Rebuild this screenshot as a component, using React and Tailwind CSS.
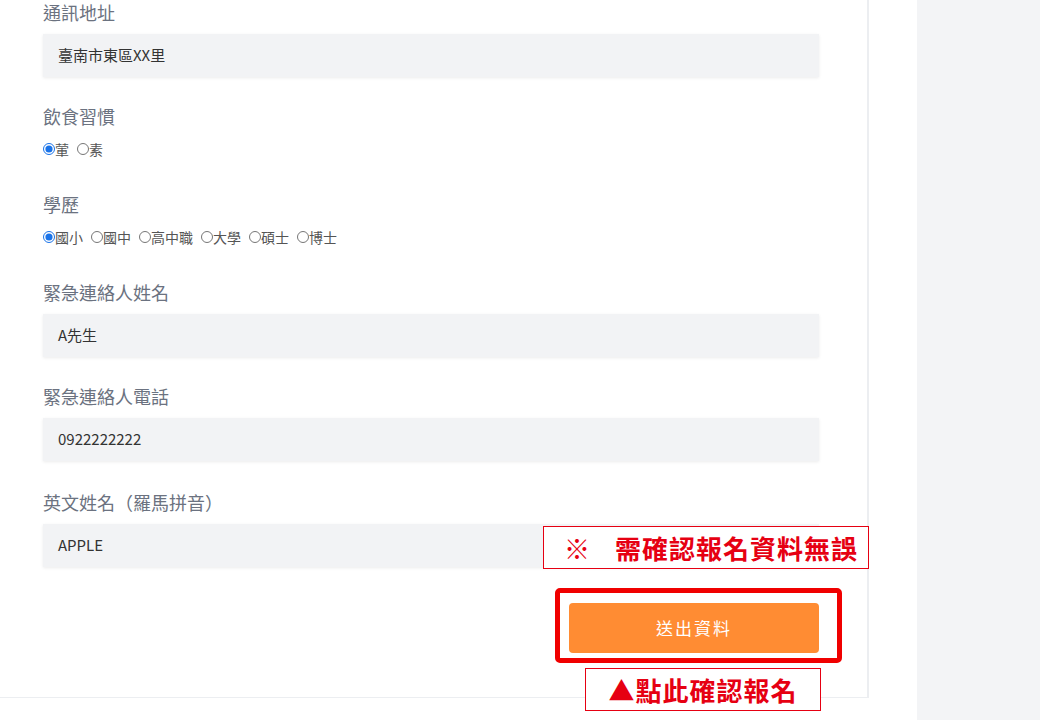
const font = { fontFamily: '"Noto Sans CJK TC", "Noto Sans", sans-serif' };

function Label({ children }) {
  return <div className="text-[18px] leading-6 text-[#6b7280]">{children}</div>;
}

function TextField({ label, value, gap = 'mb-[28px]' }) {
  return (
    <div className={gap}>
      <Label>{label}</Label>
      <div className="mt-[10px] h-[43px] bg-[#f2f3f5] shadow-[0_1px_3px_rgba(0,0,0,0.08)] flex items-center pl-[15px] text-[15px] text-[#333]">
        {value}
      </div>
    </div>
  );
}

function RadioGroup({ label, name, options }) {
  return (
    <div className="mb-[33px]">
      <Label>{label}</Label>
      <div className="mt-[11px] h-5 flex items-center text-[14px] text-[#555]">
        {options.map((o, i) => (
          <label key={o} className="flex items-center mr-[8px]">
            <input
              type="radio"
              name={name}
              defaultChecked={i === 0}
              className="m-0 w-3 h-3 accent-[#1a73e8]"
            />
            <span>{o}</span>
          </label>
        ))}
      </div>
    </div>
  );
}

export default function App() {
  return (
    <div className="flex min-h-[720px] bg-white" style={font}>
      <div className="w-[917px] shrink-0 bg-white">
        <div className="relative w-[869px] border-r-2 border-b border-[#eceef1] pl-[43px] pr-[48px] pb-[44px]">
          <TextField label="通訊地址" value="臺南市東區XX里" gap="mb-[27px]" />
          <RadioGroup label="飲食習慣" name="diet" options={['葷', '素']} />
          <RadioGroup
            label="學歷"
            name="edu"
            options={['國小', '國中', '高中職', '大學', '碩士', '博士']}
          />
          <TextField label="緊急連絡人姓名" value="A先生" gap="mb-[27px]" />
          <TextField label="緊急連絡人電話" value="0922222222" gap="mb-[29px]" />
          <TextField label="英文姓名（羅馬拼音）" value="APPLE" gap="" />

          <div className="flex justify-end mt-[36px]">
            <button className="w-[250px] h-[50px] rounded-sm bg-[#ff8c33] text-white text-[17px] tracking-[2px]">
              送出資料
            </button>
          </div>

          {/* 標註 */}
          <div className="absolute left-[543px] top-[526px] w-[326px] h-[43px] border border-[#e60012] bg-white flex items-center pl-[20px] text-[26px] tracking-[1px] font-bold text-[#e60012]">
            <span className="mr-[24px]">※</span>需確認報名資料無誤
          </div>
          <div className="absolute left-[555px] top-[588px] w-[287px] h-[75px] border-[5px] border-[#f00000] rounded-[5px]" />
        </div>
        <div className="relative">
          <div className="absolute left-[585px] -top-[30px] w-[236px] h-[43px] border border-[#e60012] bg-white flex items-center justify-center text-[26px] tracking-[1px] font-bold text-[#e60012]">
            ▲點此確認報名
          </div>
        </div>
      </div>
      <div className="flex-1 bg-[#f3f4f6]" />
    </div>
  );
}
